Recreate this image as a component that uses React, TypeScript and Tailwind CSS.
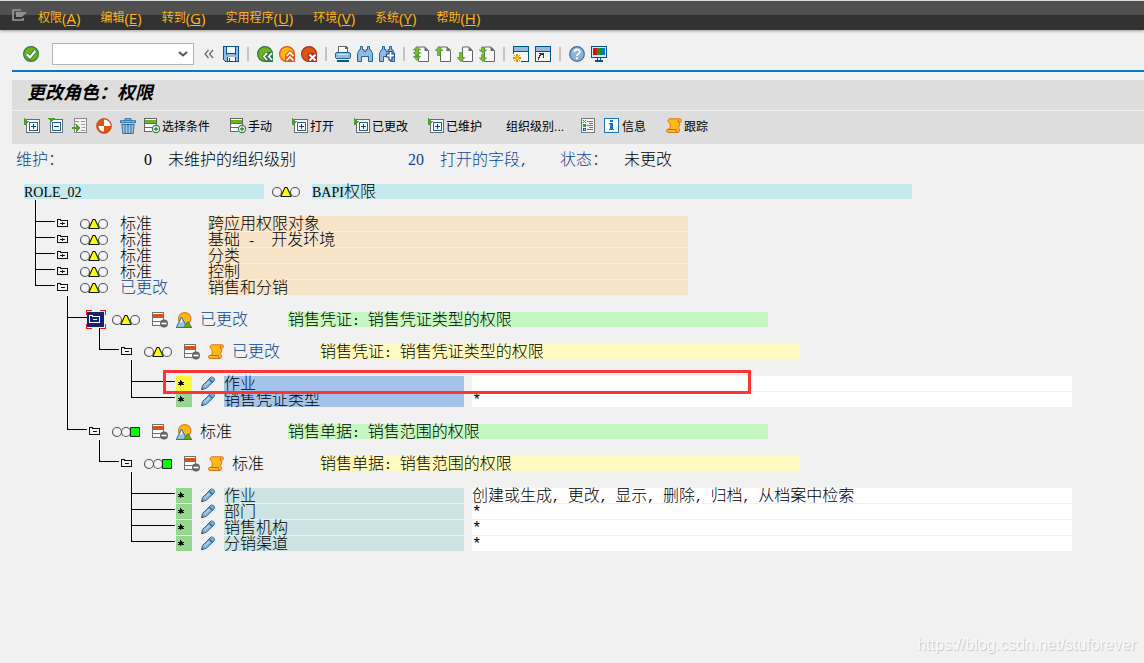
import React from "react";

type Guide = " " | "|" | "t" | "l";

/* ---------- text helpers ---------- */

function halfWidthClass(run: string) {
  if (/^\d+$/.test(run)) return "font-['Liberation_Serif',serif] text-base leading-none";
  if (/[A-Za-z]/.test(run)) return "font-['Liberation_Serif',serif] text-sm leading-none";
  if (run === "*") return "text-base leading-none";
  return "text-[13px] leading-none";
}

function Cells({ text }: { text: string }) {
  return (
    <>
      {text.split(/([\x20-\x7e]+)/).map((part, i) =>
        i % 2 ? (
          <span key={i} className={halfWidthClass(part)}>
            {part}
          </span>
        ) : (
          part
        )
      )}
    </>
  );
}

/* ---------- icons ---------- */

function Svg({ children, crisp = false }: { children: React.ReactNode; crisp?: boolean }) {
  return (
    <svg viewBox="0 0 16 16" className="block size-4 shrink-0" shapeRendering={crisp ? "crispEdges" : "auto"} aria-hidden="true">
      {children}
    </svg>
  );
}

const CheckIcon = () => (
  <Svg>
    <circle cx="8" cy="8" r="7.4" fill="#6db31b" stroke="#2f7a45" strokeWidth="1.2" />
    <path d="M3.8 8.4 7 11.4 12.3 5" fill="none" stroke="#2f7a45" strokeWidth="4" />
    <path d="M3.8 8.4 7 11.4 12.3 5" fill="none" stroke="#fff" strokeWidth="2.2" />
  </Svg>
);
const SaveIcon = () => (
  <Svg crisp>
    <path d="M0 0h16v16H2l-2-2z" fill="#00568f" />
    <path d="M1 1h2v8h10V1h2v14h-2v-4H4v4H2l-1-1z" fill="#93bade" />
    <path d="M4 1h8v6H4z" fill="#f5f7fa" />
    <path d="M4 8h8v1H4z" fill="#93bade" />
    <path d="M5 11h7v4H5z" fill="#f5f7fa" />
    <path d="M6 12h1v3H6z" fill="#00568f" />
  </Svg>
);
const BackIcon = () => (
  <Svg>
    <circle cx="8" cy="8" r="7.4" fill="#6db31b" stroke="#2f7a45" strokeWidth="1.2" />
    <path d="M4.500 10.500 9 6h7v10H9z" fill="#2f7a45" />
    <path d="M10 7 6.800 10.500 10 14M15 7l-3.200 3.500L15 14" fill="none" stroke="#fff" strokeWidth="1.700" />
  </Svg>
);
const ExitIcon = () => (
  <Svg>
    <circle cx="8" cy="8" r="7.4" fill="#fcb814" stroke="#e0561a" strokeWidth="1.2" />
    <path d="M6 8.500 11 4l5 4.500V16H6z" fill="#e0561a" />
    <path d="M7.500 10 11 6.500l3.500 3.500M7.500 14.500 11 11l3.500 3.500" fill="none" stroke="#fff" strokeWidth="1.700" />
  </Svg>
);
const CancelIcon = () => (
  <Svg>
    <circle cx="8" cy="8" r="7.4" fill="#d9570f" stroke="#a93226" strokeWidth="1.2" />
    <path d="M7 7h9v9H7z" fill="#b03024" />
    <path d="m8.500 8.500 6 6m0-6-6 6" fill="none" stroke="#fff" strokeWidth="2.200" />
  </Svg>
);
const PrintIcon = () => (
  <Svg crisp>
    <path d="M3 0h8l2 2v5H3z" fill="#666" />
    <path d="M4 1h6v2h2v4H4z" fill="#fff" />
    <path d="M1 6h14v1h1v5h-1v1H1v-1H0V7h1z" fill="#1d689b" />
    <path d="M1 7h14v5H1z" fill="#93bade" />
    <path d="M3 8h10v1H3z" fill="#d5e4f2" />
    <path d="M2 14h12v2H2z" fill="#00568f" />
  </Svg>
);
const glasses = "M3.500.500h2v3h1.500v2h2v-2h1.500v-3h2v3h1l2 4v8h-4v-5H4.500v5h-4v-8l2-4h1z";
const FindIcon = () => (
  <Svg>
    <path d={glasses} transform="translate(0 0)" fill="#93bade" stroke="#1d689b" />
  </Svg>
);
const FindNextIcon = () => (
  <Svg>
    <path d={glasses} fill="#93bade" stroke="#1d689b" />
    <path d="M10 5.500h3V8h2.500v3H13v3h-3v-3H7.500V8H10z" fill="#fff" stroke="#25408f" strokeWidth="1.200" />
  </Svg>
);
const arrowPaths = {
  first: "M4 .3 7.700 4H5.500v2.500H7.700L4 10.200.3 6.500h2.200V4H.3zM.3 10.500h7.400L4 14.500zM2.500 9h3v2h-3z",
  up: "M4 .3 7.800 4.500H5.500v5h-3v-5H.2z",
  down: "M4 15.700.2 11.500h2.300v-5h3v5h2.300z",
  last: "M4 7.500.3 4h2.200V1h3v3h2.200zM4 15.700.3 12h2.200V8.500h3V12h2.200z",
};
function PageIcon({ kind }: { kind: keyof typeof arrowPaths }) {
  return (
    <Svg>
      <path d="M5.500 1H12l3.500 3.500v11h-10z" fill="#fafafa" stroke="#666" />
      <path d="M11.500 1v4h4z" fill="#666" />
      <path d={arrowPaths[kind]} fill="#7dbb25" stroke="#4c8f35" strokeWidth=".7" />
    </Svg>
  );
}
const SessionIcon = () => (
  <Svg crisp>
    <path d="M0 0h16v16H0z" fill="#00568f" />
    <path d="M1 1h14v4H1z" fill="#93bade" />
    <path d="M1 6h14v9H1z" fill="#f8f8f8" />
    <path d="M0 8h8v8H0z" fill="#f1f1f1" />
    <path d="M3 8h2v8H3zM0 11h8v2H0zM1 9h1v1H1zM6 9h1v1H6zM1 14h1v1H1zM6 14h1v1H6z" fill="#e88a10" />
    <path d="M2 10h4v4H2z" fill="#fcb814" />
  </Svg>
);
const ShortcutIcon = () => (
  <Svg crisp>
    <path d="M0 0h16v16H0z" fill="#00568f" />
    <path d="M1 1h14v4H1z" fill="#93bade" />
    <path d="M1 6h14v9H1z" fill="#f4f4f4" />
    <path d="M4 7h5v5H8V9H6v1H5v2H4v2H3v-3h1V9h1V8H4z" fill="#333" />
  </Svg>
);
const HelpIcon = () => (
  <Svg>
    <circle cx="8" cy="8" r="7.300" fill="#8db2d8" stroke="#3a6c9c" strokeWidth="1.200" />
    <path d="M5.300 6.200c0-3.600 5.600-3.400 5.400-.3 0 1.900-2.600 1.800-2.700 4.100M8 11.300v2" fill="none" stroke="#fff" strokeWidth="1.900" />
  </Svg>
);
const MonitorIcon = () => (
  <Svg crisp>
    <path d="M0 0h16v12H0z" fill="#00568f" />
    <path d="M1 1h14v10H1z" fill="#d9e8f5" />
    <path d="M2 2h4v7H2z" fill="#d81010" />
    <path d="M6 2h4v7H6z" fill="#129a1c" />
    <path d="M10 2h4v7h-4z" fill="#0b72c4" />
    <path d="M6 12h1v2h2v-2h1v2h2v2H4v-2h2z" fill="#00568f" />
  </Svg>
);
const ExpandIcon = () => (
  <Svg crisp>
    <path d="M2 1h14v14H2z" fill="#6c6c6c" />
    <path d="M3 2h12v12H3z" fill="#fff" />
    <path d="M5 4h9v9H5zM6 5v7h7V5z" fill="#1668a5" fillRule="evenodd" />
    <path d="M7 8h5v1H7zM9 6h1v5H9z" fill="#16407d" />
    <path d="M0 0h1v1h1v1h1v1h2v1H4v1H3v1H2v1H0z" fill="#4f9d2c" />
  </Svg>
);
const CollapseIcon = () => (
  <Svg crisp>
    <path d="M2 1h13v14H2z" fill="#6c6c6c" />
    <path d="M3 2h11v12H3z" fill="#fff" />
    <path d="M4 4h9v9H4zM5 5v7h7V5z" fill="#1668a5" fillRule="evenodd" />
    <path d="M6 8h5v1H6z" fill="#16407d" />
    <path d="M0 0h7v1H6v1H5v1H4v1H3V3H2V2H1V1H0z" fill="#4f9d2c" />
  </Svg>
);
const InsertIcon = () => (
  <Svg crisp>
    <path d="M2 0h13v15H2z" fill="#8a8a8a" />
    <path d="M3 1h11v13H3z" fill="#f4f4f4" />
    <path d="M3 3h4v1H3zM9 3h4v1H9zM3 6h2v1H3zM9 6h4v1H9zM10 9h3v1h-3zM9 12h4v1H9z" fill="#999" />
    <path d="M0 9h4V6h1v1h1v1h1v1h1v2H7v1H6v1H5v1H4v-3H0z" fill="#4f9d2c" />
  </Svg>
);
const BallIcon = () => (
  <Svg>
    <circle cx="8" cy="8" r="7.400" fill="#dd5413" stroke="#b8401c" strokeWidth=".8" />
    <path d="M8 1.500V8h6.500A6.500 6.500 0 0 0 8 1.500z" fill="#fff" />
    <path d="M8 13.500V8H2.500A5.500 5.500 0 0 0 8 13.500z" fill="#fff" />
  </Svg>
);
const TrashIcon = () => (
  <Svg>
    <path d="M5 2.500V.7h6v1.800M.5 2.700h15v2H.5z" fill="#93bade" stroke="#2a6ea8" />
    <path d="M1.800 6.500h12.400l-1 9H2.800z" fill="#a5c6e4" stroke="#2a6ea8" />
    <path d="M5 7v8M8 7v8M11 7v8" stroke="#2a6ea8" />
  </Svg>
);
const AddRowIcon = () => (
  <Svg>
    <path d="M0 0h13v8H0zM0 8h8v6H0z" fill="#666" />
    <path d="M1 1h11v1H1zM1 6h11v3H1zM1 10h7v3H1z" fill="#fff" />
    <path d="M1 2h11v3H1z" fill="#6db31b" />
    <circle cx="12" cy="11" r="3.600" fill="#fff" stroke="#35804a" strokeWidth="1.200" />
    <path d="M9.800 11h4.400M12 8.800v4.400" stroke="#35804a" strokeWidth="1.300" />
  </Svg>
);
const RemoveRowIcon = () => (
  <Svg>
    <path d="M0 0h12v14H0z" fill="#707070" />
    <path d="M1 1h10v1H1zM1 6h10v3H1zM1 10h10v3H1z" fill="#fff" />
    <path d="M1 2h10v3H1z" fill="#d9541a" />
    <circle cx="12" cy="11.500" r="4" fill="#666" />
    <path d="M9.500 11.500h5" stroke="#fff" strokeWidth="1.600" />
  </Svg>
);
const ListIcon = () => (
  <Svg crisp>
    <path d="M1 0h14v15H1z" fill="#777" />
    <path d="M2 1h12v13H2z" fill="#f4f4f4" />
    <path d="M7 3h6v1H7zM9 5h4v1H9zM7 7h6v1H7zM9 9h4v1H9zM7 11h6v1H7z" fill="#777" />
    <path d="M3 2h1v1h1V2h1v1H5v1h1v1H5V4H4v1H3V4h1V3H3z" fill="#a56a08" />
    <path d="M3 6h3v3H3z" fill="#3e9842" />
    <path d="M3 10h3v3H3z" fill="#155f9b" />
    <path d="M4 11h1v1H4z" fill="#fff" />
  </Svg>
);
const InfoIcon = () => (
  <Svg crisp>
    <path d="M0 0h15v15H0z" fill="#1679bf" />
    <path d="M1 1h13v13H1z" fill="#fff" />
    <path d="M6 2h3v2H6zM5 5h4v6h1v1H5v-1h1V6H5z" fill="#1679bf" />
  </Svg>
);
const ScrollIcon = () => (
  <Svg>
    <path d="M3.500.8h10.800c1.500 0 1.500 3.400 0 3.400H12.800l1 2.800-1.200 2.400.8 2.600c.2 2-.8 2.500-2.400 2.500H1.600c-1.400 0-1.400-3.200 0-3.200H3.500L4.500 8 3.600 5C1.600 4.500 1.600 1.200 3.500.8z" fill="#fcbb17" stroke="#e07416" />
    <path d="M12.800 4.200c-1.300-.2-1.200-2 .4-1.900M1.500 11.500h8.700c.3 1.600 0 2.500 1.400 2.800" fill="none" stroke="#d95b14" />
  </Svg>
);
const SceneIcon = () => (
  <Svg>
    <circle cx="8.700" cy="6.800" r="6.200" fill="#fcb814" stroke="#e57f14" strokeWidth="1.200" />
    <path d="M.3 15.500 5.500 5 11 15.500z" fill="#9dc0df" stroke="#2d6c9d" />
    <path d="m5.500 6 1 4-2.500 1z" fill="#fff" />
    <path d="M7.500 15.500 12 9.500l3.700 6z" fill="#67ab24" stroke="#3f7c37" />
  </Svg>
);
const PencilIcon = () => (
  <Svg>
    <path d="m1.700 13.500.8-4L10.300 1.600c2.400-1.800 5.400 1.200 3.600 3.400L6 12.500z" fill="#7faed3" stroke="#2a6c9a" />
    <path d="m9 3 3.600 3.500" stroke="#2a6c9a" strokeWidth="1.200" />
    <path d="m4.500 10.500 5-5" stroke="#b8d4ea" strokeWidth="1.200" />
    <path d="m1.300 14.200.6-2.200 1.600 1.600z" fill="#1d4568" />
  </Svg>
);
const StarIcon = () => (
  <svg viewBox="0 0 16 15" className="block h-[15px] w-4" shapeRendering="crispEdges" aria-hidden="true">
    <path d="M4 4h1v1h1v1h2v1H7v1h1v1H5v1H4V9H2V8h1V7H2V6h2z" fill="#111" />
  </svg>
);
function FolderIcon({ open, light = false }: { open: boolean; light?: boolean }) {
  return (
    <svg viewBox="0 0 16 15" className="block h-[15px] w-4" shapeRendering="crispEdges" aria-hidden="true">
      <path d="M1 2h4v1h7v7H1z" fill={light ? "#fff" : "#111"} />
      <path d="M2 3h2v1h7v5H2z" fill={light ? "#10246f" : "#f4f4f4"} />
      <path d={open ? "M5 6h4v1H5z" : "M4 6h5v1H4zM6 5h1v3H6z"} fill={light ? "#fff" : "#111"} />
    </svg>
  );
}
function Lights({ state }: { state: "yellow" | "green" }) {
  return (
    <svg viewBox="0 0 28 15" className="block h-[15px] w-7 shrink-0" role="img" aria-label={state}>
      <g fill="#f4f4f4" stroke="#555" strokeWidth="1.100">
        <circle cx="5" cy="8" r="4.500" />
        {state === "yellow" ? <circle cx="23" cy="8" r="4.500" /> : <circle cx="14" cy="8" r="4.500" />}
      </g>
      {state === "yellow" ? (
        <path d="M13 3.500h2l4 8.500v.5H9V12z" fill="#ff0" stroke="#111" strokeWidth="1.100" />
      ) : (
        <path d="M18.500 3.500h9v9h-9z" fill="#0f0" stroke="#222" />
      )}
    </svg>
  );
}

/* ---------- bars ---------- */

const menus: [string, string][] = [
  ["权限", "A"],
  ["编辑", "E"],
  ["转到", "G"],
  ["实用程序", "U"],
  ["环境", "V"],
  ["系统", "Y"],
  ["帮助", "H"],
];

function MenuBar() {
  return (
    <nav aria-label="菜单" className="flex h-[30px] items-start border-t border-[#d8dcdc] bg-linear-to-b from-[#505050] from-48% to-[#323232] to-48% shadow-[0_1px_3px_#999]">
      <button aria-label="系统菜单" className="mt-2 mr-2.5 ml-3">
        <svg viewBox="0 0 16 12" className="block h-3 w-4" aria-hidden="true">
          <path d="M9 1H1v10h10V9" fill="none" stroke="#9a9a9a" strokeWidth="1.600" />
          <path d="M4 3h11l-5 5H4z" fill="#8f8f8f" />
        </svg>
      </button>
      <div className="flex items-start gap-5">
        {menus.map(([name, key]) => (
          <button key={name} className="mt-[7px] flex h-5 items-center text-xs whitespace-nowrap text-[#fdb515]">
            {name}
            <span className="font-['Open_Sans',sans-serif] text-[15px] leading-5">
              (<u>{key}</u>)
            </span>
          </button>
        ))}
      </div>
    </nav>
  );
}

const Tool = ({ label, children }: { label: string; children: React.ReactNode }) => (
  <button aria-label={label} className="shrink-0">
    {children}
  </button>
);
const Divider = () => (
  <div className="flex w-1.5 justify-center">
    <div className="h-3.5 w-0.5 bg-[#c4c4c4]" />
  </div>
);

function StandardToolbar() {
  return (
    <div role="toolbar" aria-label="标准" className="ml-3 flex h-[42px] items-center gap-1.5 border-b-2 border-[#007cc0] pt-2 pl-[11px]">
      <Tool label="确认"><CheckIcon /></Tool>
      <div className="ml-[7px] flex h-[22px] w-[142px] items-center border border-[#b5b5b5] bg-white">
        <input aria-label="命令" className="h-full min-w-0 flex-1 bg-transparent px-1 text-xs outline-none" />
        <button aria-label="命令历史" className="px-1">
          <svg viewBox="0 0 12 8" className="block h-2 w-3" aria-hidden="true">
            <path d="m2 2 4 3.500L10 2" fill="none" stroke="#555" strokeWidth="2" />
          </svg>
        </button>
      </div>
      <button aria-label="收起" className="mr-[3px] ml-1">
        <svg viewBox="0 0 10 10" className="block size-2.5" aria-hidden="true">
          <path d="M4.500 1 1 5l3.500 4M9 1 5.500 5 9 9" fill="none" stroke="#666" strokeWidth="1.200" />
        </svg>
      </button>
      <Tool label="保存"><SaveIcon /></Tool>
      <Divider />
      <Tool label="返回"><BackIcon /></Tool>
      <Tool label="退出"><ExitIcon /></Tool>
      <Tool label="取消"><CancelIcon /></Tool>
      <Divider />
      <Tool label="打印"><PrintIcon /></Tool>
      <Tool label="查找"><FindIcon /></Tool>
      <Tool label="查找下一个"><FindNextIcon /></Tool>
      <Divider />
      <Tool label="第一页"><PageIcon kind="first" /></Tool>
      <Tool label="上一页"><PageIcon kind="up" /></Tool>
      <Tool label="下一页"><PageIcon kind="down" /></Tool>
      <Tool label="最后一页"><PageIcon kind="last" /></Tool>
      <Divider />
      <Tool label="新建会话"><SessionIcon /></Tool>
      <Tool label="创建快捷方式"><ShortcutIcon /></Tool>
      <Divider />
      <Tool label="帮助"><HelpIcon /></Tool>
      <Tool label="定制布局"><MonitorIcon /></Tool>
    </div>
  );
}

function TextTool({ icon, text }: { icon?: React.ReactNode; text: string }) {
  return (
    <button className="flex items-center gap-0.5 whitespace-nowrap">
      {icon}
      <span className="pt-0.5 text-xs leading-4">{text}</span>
    </button>
  );
}

function AppToolbar() {
  return (
    <div role="toolbar" aria-label="应用程序" className="flex h-[33px] items-center gap-5 bg-[#dddddd] pb-[3px] pl-3">
      <div className="flex items-center gap-2">
        <Tool label="展开"><ExpandIcon /></Tool>
        <Tool label="折叠"><CollapseIcon /></Tool>
        <Tool label="插入"><InsertIcon /></Tool>
        <Tool label="技术名称"><BallIcon /></Tool>
        <Tool label="删除"><TrashIcon /></Tool>
        <TextTool icon={<AddRowIcon />} text="选择条件" />
      </div>
      <TextTool icon={<AddRowIcon />} text="手动" />
      <TextTool icon={<ExpandIcon />} text="打开" />
      <TextTool icon={<ExpandIcon />} text="已更改" />
      <TextTool icon={<ExpandIcon />} text="已维护" />
      <div className="ml-1 flex items-center gap-4">
        <TextTool text="组织级别..." />
        <div className="flex items-center gap-2">
          <Tool label="图例"><ListIcon /></Tool>
          <TextTool icon={<InfoIcon />} text="信息" />
        </div>
      </div>
      <TextTool icon={<ScrollIcon />} text="跟踪" />
    </div>
  );
}

/* ---------- authorization tree ---------- */

function GuideCell({ kind, wide }: { kind: Guide; wide: boolean }) {
  return (
    <div className={wide ? "flex w-14 shrink-0 pl-[11px]" : "flex w-8 shrink-0 pl-[11px]"}>
      {kind !== " " && <div className={kind === "l" ? "h-1.5 w-px bg-black" : "h-4 w-px bg-black"} />}
      {(kind === "t" || kind === "l") && <div className="mt-[5px] mr-px h-px flex-1 bg-black" />}
    </div>
  );
}

function Row({ guides, children }: { guides: string; children?: React.ReactNode }) {
  return (
    <div className="relative flex h-4">
      {guides.split("").map((g, i) => (
        <GuideCell key={i} kind={g as Guide} wide={i === 3} />
      ))}
      {children}
    </div>
  );
}

const barBase = "h-[15px] shrink-0 whitespace-pre";

function Folder({ open = true, selected = false }: { open?: boolean; selected?: boolean }) {
  return (
    <button aria-label={open ? "折叠" : "展开"} className="relative h-4 w-4 shrink-0">
      {selected && (
        <svg viewBox="0 0 20 19" className="absolute -top-0.5 -left-0.5 h-[19px] w-5" shapeRendering="crispEdges" aria-hidden="true">
          <path d="M1 2h17v15H1z" fill="#10246f" />
          <path d="M.5 5V.5H6M14 .5h5.500V5M19.500 14v4.500H14M6 18.500H.5V14" fill="none" stroke="#e8141c" />
        </svg>
      )}
      <span className="relative block">
        <FolderIcon open={open} light={selected} />
      </span>
    </button>
  );
}

interface NodeProps {
  guides: string;
  label: string;
  text: string;
  tone: string;
  open?: boolean;
  selected?: boolean;
  light?: "yellow" | "green";
  icon?: React.ReactNode;
}

function NodeRow({ guides, label, text, tone, open, selected, light = "yellow", icon }: NodeProps) {
  return (
    <Row guides={guides}>
      <Folder open={open} selected={selected} />
      <div className="ml-2 flex shrink-0">
        <Lights state={light} />
      </div>
      {icon && (
        <div className="ml-3 flex shrink-0 gap-2">
          <RemoveRowIcon />
          {icon}
        </div>
      )}
      <span className={`${icon ? "ml-2" : "ml-3"} w-22 shrink-0 ${label === "已更改" ? "text-[#0b4493]" : ""}`}>{label}</span>
      <div className={`${barBase} w-120 ${tone}`}>
        <Cells text={text} />
      </div>
    </Row>
  );
}

interface LeafProps {
  guides: string;
  name: string;
  value: string;
  tone: string;
  star?: string;
  marked?: boolean;
}

function LeafRow({ guides, name, value, tone, star = "bg-[#94d88f]", marked }: LeafProps) {
  return (
    <Row guides={guides}>
      <div className={`h-[15px] w-4 shrink-0 ${star}`}>
        <StarIcon />
      </div>
      <button aria-label="更改" className="mx-2 h-4 w-4 shrink-0">
        <PencilIcon />
      </button>
      <div className={`${barBase} w-60 ${tone}`}>
        <Cells text={name} />
      </div>
      <div className={`${barBase} ml-2 w-150 bg-white`}>
        <Cells text={value} />
      </div>
      {marked && <div className="absolute -top-1.5 left-[139px] z-10 h-6 w-[588px] border-3 border-[#fc3434]" />}
    </Row>
  );
}

const peach = "bg-[#f8e4c8]";
const green = "bg-[#c6f7c0]";
const yellow = "bg-[#fffbc0]";
const blue = "bg-[#a3c3ea]";
const teal = "bg-[#cbe3e3]";

function Tree() {
  return (
    <div className="mt-4 pl-6">
      <Row guides="">
        <div className={`${barBase} w-60 bg-[#c5eaed]`}>
          <Cells text="ROLE_02" />
        </div>
        <div className="mx-2 flex shrink-0">
          <Lights state="yellow" />
        </div>
        <div className={`${barBase} ml-1 w-150 bg-[#c5eaed]`}>
          <Cells text="BAPI权限" />
        </div>
      </Row>
      <Row guides="|" />
      <NodeRow guides="t" open={false} label="标准" text="跨应用权限对象" tone={peach} />
      <NodeRow guides="t" open={false} label="标准" text="基础 -  开发环境" tone={peach} />
      <NodeRow guides="t" open={false} label="标准" text="分类" tone={peach} />
      <NodeRow guides="t" open={false} label="标准" text="控制" tone={peach} />
      <NodeRow guides="l" open label="已更改" text="销售和分销" tone={peach} />
      <Row guides=" |" />
      <NodeRow guides=" t" open selected label="已更改" text="销售凭证: 销售凭证类型的权限" tone={green} icon={<SceneIcon />} />
      <Row guides=" ||" />
      <NodeRow guides=" |l" open label="已更改" text="销售凭证: 销售凭证类型的权限" tone={yellow} icon={<ScrollIcon />} />
      <Row guides=" | |" />
      <LeafRow guides=" | t" name="作业" value="" tone={blue} star="bg-[#fff73c]" marked />
      <LeafRow guides=" | l" name="销售凭证类型" value="*" tone={blue} />
      <Row guides=" |" />
      <NodeRow guides=" l" open label="标准" text="销售单据: 销售范围的权限" tone={green} light="green" icon={<SceneIcon />} />
      <Row guides="  |" />
      <NodeRow guides="  l" open label="标准" text="销售单据: 销售范围的权限" tone={yellow} light="green" icon={<ScrollIcon />} />
      <Row guides="   |" />
      <LeafRow guides="   t" name="作业" value="创建或生成, 更改, 显示, 删除, 归档, 从档案中检索" tone={teal} />
      <LeafRow guides="   t" name="部门" value="*" tone={teal} />
      <LeafRow guides="   t" name="销售机构" value="*" tone={teal} />
      <LeafRow guides="   l" name="分销渠道" value="*" tone={teal} />
    </div>
  );
}

export default function App() {
  return (
    <div className="relative min-h-screen overflow-hidden bg-[#f1f1f1] font-['Liberation_Sans','Noto_Sans_CJK_SC',sans-serif] text-black">
      <MenuBar />
      <StandardToolbar />
      <div className="mt-2 ml-3">
        <h1 className="mb-px flex h-[30px] items-center bg-[#dddddd] pb-1 pl-[15px] text-lg leading-6 font-bold italic">更改角色：权限</h1>
        <AppToolbar />
      </div>
      <main className="font-['Liberation_Mono','Noto_Sans_CJK_SC',monospace] text-base leading-[18px] font-light whitespace-nowrap">
        <div className="mt-2 flex h-4 pl-4">
          <span className="w-32 shrink-0 text-[#0b4493]">维护：</span>
          <span className="w-6 shrink-0"><Cells text="0" /></span>
          <span className="w-60 shrink-0">未维护的组织级别</span>
          <span className="w-8 shrink-0 text-[#0b4493]"><Cells text="20" /></span>
          <span className="w-30 shrink-0 text-[#0b4493]"><Cells text="打开的字段," /></span>
          <span className="w-16 shrink-0 text-[#0b4493]">状态：</span>
          <span>未更改</span>
        </div>
        <Tree />
      </main>
      <a href="https://blog.csdn.net/stuforever" className="absolute right-2 bottom-2 text-base leading-5 text-[#fafafa] [text-shadow:1px_1px_1px_#c4c4c4]">
        https://blog.csdn.net/stuforever
      </a>
    </div>
  );
}
